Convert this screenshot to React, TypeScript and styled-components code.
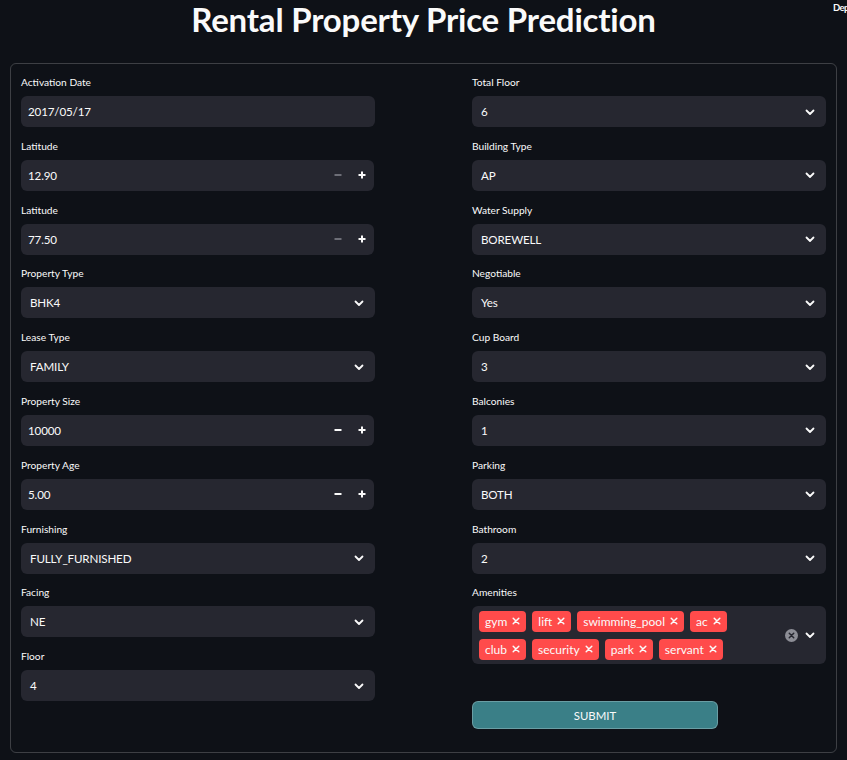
import React from "react";
import styled, { createGlobalStyle } from "styled-components";

const Global = createGlobalStyle`
  html, body { margin: 0; padding: 0; background: #0e1117; }
  body { font-family: "Lato", "Noto Sans", sans-serif; color: #fafafa; }
  * { box-sizing: border-box; }
`;

const Page = styled.div`
  position: relative;
  width: 847px;
  height: 760px;
  overflow: hidden;
  background: #0e1117;
`;

const DeployHint = styled.div`
  position: absolute;
  top: 2px;
  left: 833px;
  font-size: 9.5px;
  font-weight: 700;
  letter-spacing: -0.6px;
  color: #fafafa;
  white-space: nowrap;
`;

const Title = styled.h1`
  margin: 0;
  height: 63px;
  text-align: center;
  font-family: "Lato", sans-serif;
  font-weight: 700;
  font-size: 33px;
  line-height: 38px;
  letter-spacing: -0.2px;
  color: #fafafa;
`;

const Form = styled.form`
  margin: 0 10px;
  width: 827px;
  height: 690px;
  border: 1px solid rgba(250, 250, 250, 0.2);
  border-radius: 6px;
  padding: 11px 10px 10px 10px;
  display: grid;
  grid-template-columns: 354px 354px;
  column-gap: 97px;
`;

const Column = styled.div`
  display: flex;
  flex-direction: column;
  gap: 11.8px;
`;

const Field = styled.div`
  display: flex;
  flex-direction: column;
`;

const Label = styled.label`
  font-size: 10.2px;
  line-height: 14px;
  height: 14px;
  margin-bottom: 7px;
  color: #fafafa;
`;

const Box = styled.div<{ $w?: number }>`
  height: 31px;
  width: ${(p) => p.$w ?? 354}px;
  background: #262730;
  border-radius: 6px;
  display: flex;
  align-items: center;
  font-size: 11.6px;
  letter-spacing: -0.15px;
  color: #fafafa;
`;

const TextValue = styled.span<{ $pad: number }>`
  flex: 1;
  padding-left: ${(p) => p.$pad}px;
  white-space: nowrap;
`;

const Step = styled.button<{ $dim?: boolean }>`
  width: 24px;
  height: 31px;
  border: 0;
  background: transparent;
  padding: 0;
  display: flex;
  align-items: center;
  justify-content: center;
  color: ${(p) => (p.$dim ? "#6d6e77" : "#fafafa")};
`;

const Chevron = styled.svg`
  width: 16px;
  height: 16px;
  margin-right: 8px;
  flex: none;
`;

const Multi = styled.div`
  width: 354px;
  height: 58px;
  background: #262730;
  border-radius: 6px;
  display: flex;
  align-items: center;
  padding: 5px 0 5px 7px;
`;

const Tags = styled.div`
  flex: none;
  width: 280px;
  display: flex;
  flex-wrap: wrap;
  row-gap: 7px;
  column-gap: 6px;
  align-content: flex-start;
`;

const Spacer = styled.div`
  flex: 1;
`;

const Tag = styled.span`
  height: 21px;
  background: #ff4b4b;
  border-radius: 4px;
  padding: 0 6px;
  display: inline-flex;
  align-items: center;
  gap: 5px;
  font-size: 12px;
  color: #fafafa;
`;

const TagX = styled.svg`
  width: 8px;
  height: 8px;
`;

const ClearIcon = styled.svg`
  width: 13px;
  height: 13px;
  margin-right: 4px;
  flex: none;
`;

const SubmitWrap = styled.div`
  padding-top: 25px;
`;

const Submit = styled.button`
  width: 246px;
  height: 28px;
  background: #3a7f87;
  border: 1px solid rgba(250, 250, 250, 0.25);
  border-radius: 6px;
  color: #fafafa;
  font-family: "Lato", sans-serif;
  font-size: 11.4px;
  padding: 0;
`;

const ChevronIcon = () => (
  <Chevron viewBox="0 0 16 16">
    <path d="M4.5 6.5 L8 10 L11.5 6.5" fill="none" stroke="#fafafa" strokeWidth="1.8" strokeLinecap="round" strokeLinejoin="round" />
  </Chevron>
);

const Minus = () => (
  <svg width="8" height="8" viewBox="0 0 8 8">
    <rect x="0.5" y="3" width="7" height="2" fill="currentColor" />
  </svg>
);
const Plus = () => (
  <svg width="8" height="8" viewBox="0 0 8 8">
    <rect x="0.5" y="3" width="7" height="2" fill="currentColor" />
    <rect x="3" y="0.5" width="2" height="7" fill="currentColor" />
  </svg>
);

type F =
  | { kind: "text"; label: string; value: string }
  | { kind: "number"; label: string; value: string; dim?: boolean }
  | { kind: "select"; label: string; value: string };

const left: F[] = [
  { kind: "text", label: "Activation Date", value: "2017/05/17" },
  { kind: "number", label: "Latitude", value: "12.90", dim: true },
  { kind: "number", label: "Latitude", value: "77.50", dim: true },
  { kind: "select", label: "Property Type", value: "BHK4" },
  { kind: "select", label: "Lease Type", value: "FAMILY" },
  { kind: "number", label: "Property Size", value: "10000" },
  { kind: "number", label: "Property Age", value: "5.00" },
  { kind: "select", label: "Furnishing", value: "FULLY_FURNISHED" },
  { kind: "select", label: "Facing", value: "NE" },
  { kind: "select", label: "Floor", value: "4" },
];

const right: F[] = [
  { kind: "select", label: "Total Floor", value: "6" },
  { kind: "select", label: "Building Type", value: "AP" },
  { kind: "select", label: "Water Supply", value: "BOREWELL" },
  { kind: "select", label: "Negotiable", value: "Yes" },
  { kind: "select", label: "Cup Board", value: "3" },
  { kind: "select", label: "Balconies", value: "1" },
  { kind: "select", label: "Parking", value: "BOTH" },
  { kind: "select", label: "Bathroom", value: "2" },
];

const amenities = ["gym", "lift", "swimming_pool", "ac", "club", "security", "park", "servant"];

const FieldView = ({ f }: { f: F }) => (
  <Field>
    <Label>{f.label}</Label>
    {f.kind === "text" && (
      <Box>
        <TextValue $pad={7}>{f.value}</TextValue>
      </Box>
    )}
    {f.kind === "number" && (
      <Box $w={353}>
        <TextValue $pad={7}>{f.value}</TextValue>
        <Step type="button" $dim={f.dim}>
          <Minus />
        </Step>
        <Step type="button">
          <Plus />
        </Step>
      </Box>
    )}
    {f.kind === "select" && (
      <Box>
        <TextValue $pad={9}>{f.value}</TextValue>
        <ChevronIcon />
      </Box>
    )}
  </Field>
);

export default function App() {
  return (
    <>
      <Global />
      <Page>
        <DeployHint>Deploy</DeployHint>
        <Title>Rental Property Price Prediction</Title>
        <Form onSubmit={(e) => e.preventDefault()}>
          <Column>
            {left.map((f, i) => (
              <FieldView key={i} f={f} />
            ))}
          </Column>
          <Column>
            {right.map((f, i) => (
              <FieldView key={i} f={f} />
            ))}
            <Field>
              <Label>Amenities</Label>
              <Multi>
                <Tags>
                  {amenities.map((a) => (
                    <Tag key={a}>
                      {a}
                      <TagX viewBox="0 0 8 8">
                        <path d="M1.2 1.2 L6.8 6.8 M6.8 1.2 L1.2 6.8" stroke="#fafafa" strokeWidth="1.5" strokeLinecap="round" />
                      </TagX>
                    </Tag>
                  ))}
                </Tags>
                <Spacer />
                <ClearIcon viewBox="0 0 14 14">
                  <circle cx="7" cy="7" r="7" fill="#8d8e96" />
                  <path d="M4.6 4.6 L9.4 9.4 M9.4 4.6 L4.6 9.4" stroke="#262730" strokeWidth="1.6" strokeLinecap="round" />
                </ClearIcon>
                <ChevronIcon />
              </Multi>
            </Field>
            <SubmitWrap>
              <Submit type="submit">SUBMIT</Submit>
            </SubmitWrap>
          </Column>
        </Form>
      </Page>
    </>
  );
}
